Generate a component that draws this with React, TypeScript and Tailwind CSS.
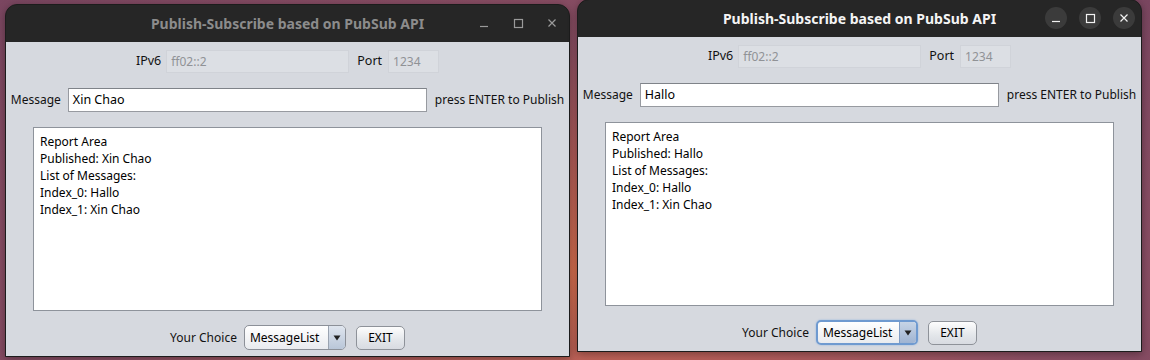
import React from 'react';

type WinProps = {
  active: boolean;
  message: string;
  published: string;
  className: string;
};

const font = { fontFamily: '"Noto Sans", "DejaVu Sans", sans-serif' };

function TitleButtons({ active }: { active: boolean }) {
  const stroke = active ? '#f2f2f2' : '#9a9a9a';
  const wrap = active
    ? 'w-[22px] h-[22px] rounded-full bg-[#3b3b3b] flex items-center justify-center'
    : 'w-[22px] h-[22px] flex items-center justify-center';
  return (
    <div className="flex items-center gap-[12px]">
      <div className={wrap}>
        <svg width="12" height="12" viewBox="0 0 12 12">
          <line x1="2" y1="9.5" x2="10" y2="9.5" stroke={stroke} strokeWidth="1.2" />
        </svg>
      </div>
      <div className={wrap}>
        <svg width="12" height="12" viewBox="0 0 12 12">
          <rect x="2.5" y="2.5" width="8" height="8" fill="none" stroke={stroke} strokeWidth="1.2" />
        </svg>
      </div>
      <div className={wrap}>
        <svg width="12" height="12" viewBox="0 0 12 12">
          <path d="M2.5 2.5 L9.5 9.5 M9.5 2.5 L2.5 9.5" stroke={stroke} strokeWidth="1.2" />
        </svg>
      </div>
    </div>
  );
}

function AppWindow({ active, message, published, className }: WinProps) {
  return (
    <div
      className={`absolute w-[565px] h-[353px] flex flex-col rounded-t-[12px] bg-[#262626] border border-[#1c1c1c] shadow-[0_2px_8px_rgba(0,0,0,0.35)] ${className}`}
    >
      {/* title bar */}
      <div className="h-[37px] flex items-center relative">
        <div
          className={`flex-1 text-center text-[14px] font-bold ${active ? 'text-[#f4f4f4]' : 'text-[#8c8c8c]'}`}
          style={font}
        >
          Publish-Subscribe based on PubSub API
        </div>
        <div className="absolute right-[6px] top-[7px]">
          <TitleButtons active={active} />
        </div>
      </div>

      {/* content */}
      <div className="flex-1 bg-[#d6d9df] flex flex-col items-center text-[12px] text-[#111]" style={font}>
        <div className="mt-[8px] flex items-center h-[23px]">
          <span className="mr-[5px] text-[12.5px]">IPv6</span>
          <div className="w-[183px] h-[23px] bg-[#dcdfe4] border border-[#d0d3d9] flex items-center px-[4px] text-[#909296]">
            ff02::2
          </div>
          <span className="ml-[8px] mr-[6px] text-[12.5px]">Port</span>
          <div className="w-[51px] h-[23px] bg-[#dcdfe4] border border-[#d0d3d9] flex items-center px-[4px] text-[#909296]">
            1234
          </div>
        </div>

        <div className="mt-[15px] flex items-center h-[24px]">
          <span className="mr-[7px]">Message</span>
          <div className="w-[359px] h-[24px] bg-white border border-[#979aa0] border-t-[#7f8389] flex items-center px-[4px] text-[12.5px] text-[#000]">
            {message}
          </div>
          <span className="ml-[8px]">press ENTER to Publish</span>
        </div>

        <div className="mt-[15px] w-[509px] h-[184px] bg-white border border-[#8e939b] px-[6px] pt-[5px] leading-[17px] text-[#000]">
          <div>Report Area</div>
          <div>Published: {published}</div>
          <div>List of Messages:</div>
          <div>Index_0: Hallo</div>
          <div>Index_1: Xin Chao</div>
        </div>

        <div className="mt-[14px] flex items-center h-[25px]">
          <span className="mr-[7px]">Your Choice</span>
          <div
            className={`w-[102px] h-[25px] rounded-[5px] flex overflow-hidden bg-[linear-gradient(#ffffff,#e9ebef)] ${
              active
                ? 'border-2 border-[#6f9ad0] shadow-[0_0_2px_#8fb3e0]'
                : 'border border-[#8c9098]'
            }`}
          >
            <div className="flex-1 flex items-center pl-[5px] text-[#000]">MessageList</div>
            <div
              className={`w-[17px] flex items-center justify-center border-l ${
                active
                  ? 'border-[#7f9cc4] bg-[linear-gradient(#c7d4e6,#9fb4d2)]'
                  : 'border-[#9aa3b0] bg-[linear-gradient(#dfe5ee,#b9c6d8)]'
              }`}
            >
              <svg width="8" height="6" viewBox="0 0 8 6">
                <path d="M0.5 0.5 L7.5 0.5 L4 5.5 Z" fill="#222" />
              </svg>
            </div>
          </div>
          <div className="ml-[10px] w-[49px] h-[24px] rounded-[5px] border border-[#8e9299] bg-[linear-gradient(#fdfdfd,#e3e6ea_60%,#d8dbe1)] flex items-center justify-center text-[#000]">
            EXIT
          </div>
        </div>
      </div>
    </div>
  );
}

export default function App() {
  return (
    <div className="relative w-[1150px] h-[360px] overflow-hidden bg-[radial-gradient(ellipse_at_50%_75%,#d9704f_0%,#b45d5a_30%,#8c4f64_60%,#7a4660_100%)]">
      <AppWindow active={false} message="Xin Chao" published="Xin Chao" className="left-[5px] top-[4px]" />
      <AppWindow active={true} message="Hallo" published="Hallo" className="left-[577px] top-[-1px]" />
    </div>
  );
}
